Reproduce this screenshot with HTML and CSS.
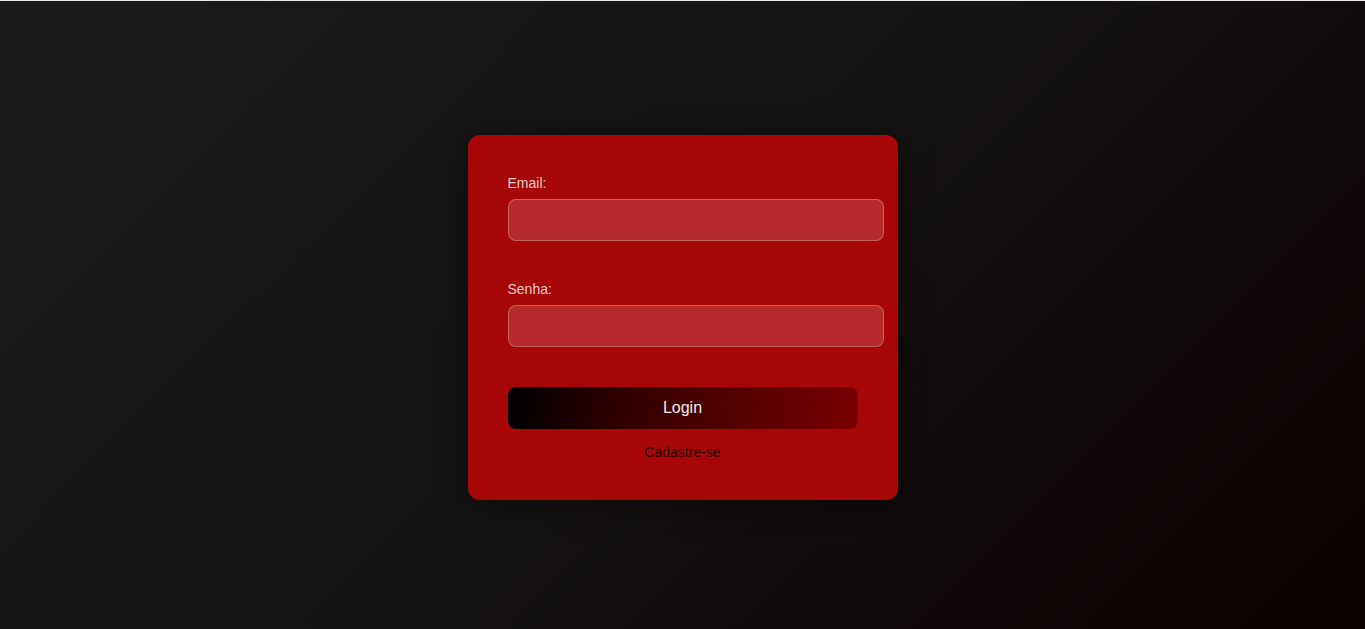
FILE: index.html
```html
<!DOCTYPE html>
<html lang="pt">
<head>
<meta charset="utf-8">
<title>Login</title>
<link rel="stylesheet" href="styles.css">
</head>
<body>
<div class="page">
  <form class="card">
    <div class="group">
      <label class="label" for="email">Email:</label>
      <input class="field" id="email" type="email">
    </div>
    <div class="group">
      <label class="label" for="senha">Senha:</label>
      <input class="field" id="senha" type="password">
    </div>
    <button class="btn" type="button">Login</button>
    <a class="link" href="#">Cadastre-se</a>
  </form>
</div>
</body>
</html>
```

FILE: styles.css
```css
html, body {
  margin: 0;
  padding: 0;
  height: 100%;
}
body {
  font-family: "Liberation Sans", Arial, sans-serif;
  background: #e8e8e8;
}
.page {
  box-sizing: border-box;
  margin-top: 1px;
  padding-top: 5px;
  height: calc(100% - 1px);
  background: linear-gradient(135deg, #1b1b1b 0%, #151313 50%, #0c0000 100%);
  display: flex;
  align-items: center;
  justify-content: center;
}
.card {
  width: 350px;
  padding: 40px;
  background: #a80707;
  border-radius: 12px;
  box-shadow: 0 4px 30px rgba(0, 0, 0, 0.5);
  display: flex;
  flex-direction: column;
}
.group {
  display: flex;
  flex-direction: column;
  margin-bottom: 40px;
}
.label {
  color: #e6c9c9;
  font-size: 14px;
  line-height: 16px;
  margin-bottom: 8px;
}
.field {
  height: 42px;
  box-sizing: border-box;
  width: 376px;
  padding: 12px;
  border: 1px solid rgba(255, 255, 255, 0.25);
  border-radius: 8px;
  background: rgba(255, 255, 255, 0.15);
  color: #fff;
  font-family: inherit;
  font-size: 14px;
  outline: none;
}
.btn {
  height: 42px;
  width: 350px;
  border: none;
  border-radius: 8px;
  background: linear-gradient(100deg, #000000 0%, #3a0000 40%, #7a0000 100%);
  color: #f3eaea;
  font-family: inherit;
  font-size: 16px;
  cursor: pointer;
}
.link {
  margin-top: 15px;
  text-align: center;
  color: #2a0000;
  font-size: 14px;
  line-height: 16px;
  text-decoration: none;
}
```
